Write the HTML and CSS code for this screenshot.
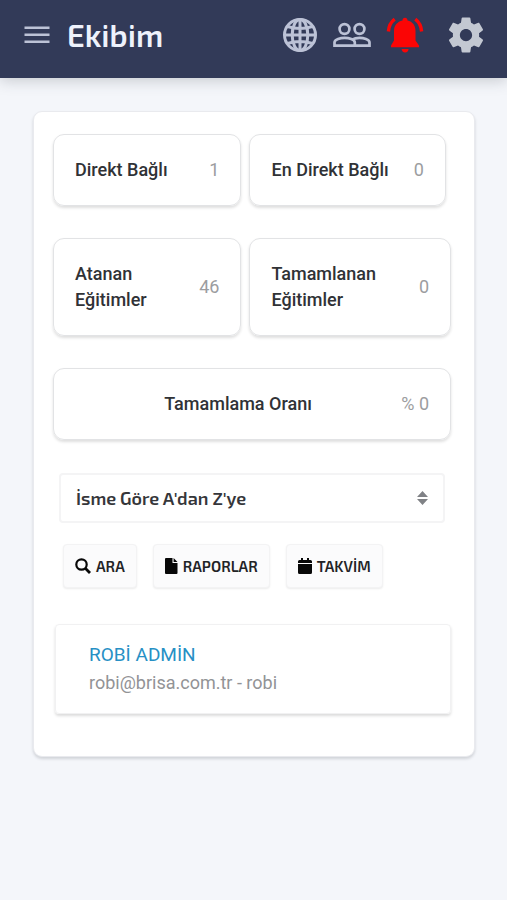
FILE: index.html
```html
<!DOCTYPE html>
<html lang="tr">
<head>
<meta charset="utf-8">
<meta name="viewport" content="width=device-width, initial-scale=1">
<title>Ekibim</title>
<link rel="stylesheet" href="styles.css">
</head>
<body>
<header class="topbar">
  <button class="icon-button" type="button" aria-label="Menü">
    <svg width="26" height="18" viewBox="0 0 26 18"><path d="M0.500 1.700h25M0.500 8.700h25M0.500 15.700h25" fill="none" stroke="currentColor" stroke-width="2.600"/></svg>
  </button>
  <h1 class="title">Ekibim</h1>
  <nav class="actions">
    <button class="icon-button" type="button" aria-label="Dil">
      <svg width="36" height="36" viewBox="0 0 36 36" fill="none" stroke="currentColor" stroke-width="3"><circle cx="18" cy="18" r="15.500"/><ellipse cx="18" cy="18" rx="7.800" ry="15.500"/><path d="M18 2.500v31M2.500 18h31M5.500 9.500q12.500 4 25 0M5.500 26.500q12.500-4 25 0"/></svg>
    </button>
    <button class="icon-button" type="button" aria-label="Ekip">
      <svg width="38" height="36" viewBox="0 0 38 36" fill="none" stroke="currentColor" stroke-width="2.700"><circle cx="11.500" cy="12" r="4.900"/><circle cx="26.500" cy="12" r="4.900"/><path d="M1.500 28.700v-3.200c0-3.300 6-4.700 10.200-4.700 4 0 10.100 1.400 10.100 4.700v3.200zM21.800 28.700h14.700v-3.200c0-3.300-6-4.700-10-4.700-2.800 0-5.600.7-7.600 1.800"/></svg>
    </button>
    <button class="icon-button bell" type="button" aria-label="Bildirimler">
      <svg width="38" height="38" viewBox="0 0 38 38"><path d="M16.500 4.500c0-1.700 1-2.700 2.500-2.700s2.500 1 2.500 2.700c5.200 1.200 8 5 8 10.200v9.800l3.500 5v1.800H5v-1.800l3-5v-9.800c0-5.200 3.300-9 8.500-10.200zM15.600 33h7c0 2-1.500 3.400-3.500 3.400S15.600 35 15.600 33z" fill="currentColor"/><path d="M8.700 3.200C5 6 2.800 10.200 2.400 15.500M29.300 3.200c3.700 2.800 5.900 7 6.300 12.300" fill="none" stroke="currentColor" stroke-width="3.400"/></svg>
    </button>
    <button class="icon-button gear" type="button" aria-label="Ayarlar">
      <svg width="42" height="42" viewBox="0 0 24 24"><path fill="currentColor" d="M19.430 12.980c.04-.32.07-.64.07-.98s-.03-.66-.07-.98l2.110-1.650c.19-.15.24-.42.12-.64l-2-3.460c-.12-.22-.39-.3-.61-.22l-2.490 1c-.52-.4-1.080-.73-1.690-.98l-.38-2.650C14.460 2.180 14.250 2 14 2h-4c-.25 0-.46.18-.49.42l-.38 2.650c-.61.25-1.170.59-1.690.98l-2.490-1c-.23-.09-.49 0-.61.22l-2 3.460c-.13.22-.07.49.12.64l2.110 1.650c-.04.32-.07.65-.07.98s.03.66.07.98l-2.110 1.650c-.19.15-.24.42-.12.64l2 3.460c.12.22.39.3.61.22l2.490-1c.52.4 1.080.73 1.690.98l.38 2.650c.03.24.24.42.49.42h4c.25 0 .46-.18.49-.42l.38-2.650c.61-.25 1.170-.59 1.690-.98l2.490 1c.23.09.49 0 .61-.22l2-3.460c.12-.22.07-.49-.12-.64l-2.110-1.650zM12 15.500c-1.930 0-3.500-1.570-3.500-3.500s1.570-3.500 3.500-3.500 3.500 1.570 3.500 3.500-1.570 3.500-3.500 3.500z"/></svg>
    </button>
  </nav>
</header>
<main class="panel">
  <section class="stats">
    <div class="row narrow">
      <article class="stat"><h2>Direkt Bağlı</h2><span class="value">1</span></article>
      <article class="stat"><h2>En Direkt Bağlı</h2><span class="value">0</span></article>
    </div>
    <div class="row">
      <article class="stat"><h2>Atanan Eğitimler</h2><span class="value">46</span></article>
      <article class="stat"><h2>Tamamlanan Eğitimler</h2><span class="value">0</span></article>
    </div>
    <article class="stat wide"><h2>Tamamlama Oranı</h2><span class="value">% 0</span></article>
  </section>
  <form class="filters">
    <select class="sort" aria-label="Sıralama">
      <option>İsme Göre A'dan Z'ye</option>
    </select>
    <div class="buttons">
      <button class="tool" type="button"><svg width="16" height="16" viewBox="0 0 16 16"><circle cx="6.500" cy="6.500" r="5.200" fill="none" stroke="currentColor" stroke-width="2.200"/><path d="M10.300 10.300l4.700 4.700" stroke="currentColor" stroke-width="2.800"/></svg>ARA</button>
      <button class="tool" type="button"><svg width="13" height="16" viewBox="0 0 13 16"><path d="M1 0h6.500v5H12.500v10q0 1-1 1H1q-1 0-1-1V1q0-1 1-1zM8.600 0L12.500 4H8.600z" fill="currentColor"/></svg>RAPORLAR</button>
      <button class="tool" type="button"><svg width="14" height="16" viewBox="0 0 14 16"><path d="M0 5V3.500Q0 2 1.500 2H3V0h2v2h4V0h2v2h1.500Q14 2 14 3.500V5zM0 6h14v8.500q0 1.500-1.500 1.500h-11Q0 16 0 14.500z" fill="currentColor"/></svg>TAKVİM</button>
    </div>
  </form>
  <article class="person">
    <a class="name" href="#robi">ROBİ ADMİN</a>
    <p class="mail">robi@brisa.com.tr - robi</p>
  </article>
</main>
</body>
</html>
```

FILE: styles.css
```css
* { box-sizing: border-box; }

body {
  margin: 0;
  min-height: 100vh;
  background: #f4f6fa;
  color: #303236;
  font: 18px/26px Roboto, sans-serif;
}

h1, h2, p { margin: 0; }
svg { display: block; flex: none; }
button { cursor: pointer; }

.topbar {
  display: flex;
  align-items: center;
  height: 78px;
  padding: 0 20px 9px 24px;
  background: #323a58;
  box-shadow: 0 2px 14px rgba(50, 60, 70, 0.25);
}

.icon-button {
  padding: 0;
  border: 0;
  background: none;
  color: #bcc2d6;
}

.title {
  margin-left: 17px;
  color: #eef2fc;
  font: 600 31px/40px "Exo 2", "Noto Sans", sans-serif;
}

.actions {
  display: flex;
  align-items: center;
  gap: 15px;
  margin-left: auto;
}

.bell { color: #fb0505; }
.gear { margin-left: 6px; color: #c3c8d2; }

.panel {
  margin: 33px 32px 33px 33px;
  padding: 22px 23px 42px 19px;
  border: 1px solid #e9eaee;
  border-radius: 9px;
  background: #fff;
  box-shadow: 0 2px 3px rgba(50, 55, 65, 0.18);
}

.stats {
  display: grid;
  gap: 32px;
}

.row {
  display: grid;
  grid-template-columns: 188fr 201fr;
  gap: 8px;
}

.narrow {
  grid-template-columns: 188fr 196fr;
  margin-right: 5px;
}

.stat {
  display: flex;
  align-items: center;
  justify-content: space-between;
  gap: 16px;
  padding: 22px 21px;
  border: 1px solid #e2e3e5;
  border-radius: 11px;
  box-shadow: 0 2px 3px rgba(0, 0, 0, 0.13);
}

.stat h2 {
  font-size: 18px;
  font-weight: 500;
}

.value {
  flex: none;
  color: #9c9da0;
}

.wide { gap: 0; }
.wide h2 { flex: 1; text-align: center; }

.filters { padding: 33px 6px 0; }

.sort {
  display: block;
  width: 100%;
  height: 50px;
  padding: 0 15px;
  border: 2px solid #f4f4f5;
  border-radius: 4px;
  appearance: none;
  color: #35363a;
  background: #fff url("data:image/svg+xml,%3Csvg xmlns='http://www.w3.org/2000/svg' width='11' height='14'%3E%3Cpath d='M5.500 0L11 6H0zM0 8h11l-5.500 6z' fill='%23808286'/%3E%3C/svg%3E") no-repeat right 15px center;
  font: 600 18px/24px "Exo 2", "Noto Sans", sans-serif;
}

.buttons {
  display: flex;
  gap: 16px;
  margin-top: 21px;
  padding-left: 4px;
}

.tool {
  display: flex;
  align-items: center;
  gap: 5px;
  height: 44px;
  padding: 0 11px;
  border: 1px solid #f3f3f4;
  border-radius: 4px;
  background: #fbfbfc;
  box-shadow: 0 1px 2px rgba(0, 0, 0, 0.08);
  color: #222326;
  font: 600 15px/20px "Exo 2", "Noto Sans", sans-serif;
}

.tool svg { color: #080808; }

.person {
  margin: 36px 0 0 2px;
  padding: 16px 33px;
  border: 1px solid #f1f1f2;
  border-radius: 4px;
  box-shadow: 0 2px 3px rgba(0, 0, 0, 0.14);
}

.name {
  display: block;
  color: #2790c5;
  font-size: 19px;
  line-height: 28px;
  text-decoration: none;
}

.mail {
  color: #929396;
  line-height: 28px;
}
```
